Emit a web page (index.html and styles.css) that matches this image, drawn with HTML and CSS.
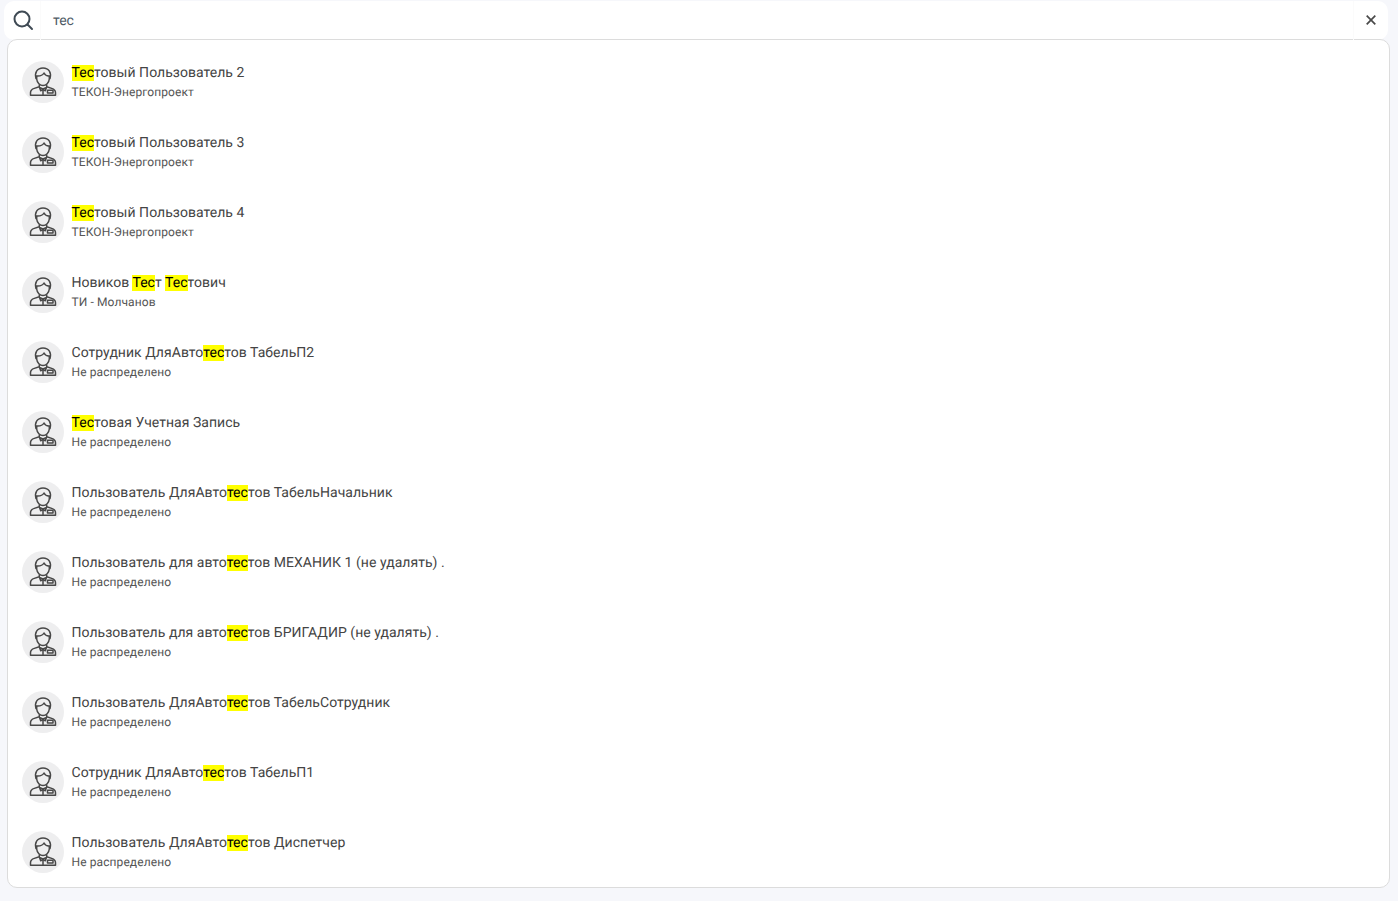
FILE: index.html
```html
<!DOCTYPE html>
<html lang="ru">
<head>
<meta charset="utf-8">
<title>Поиск</title>
<link rel="stylesheet" href="styles.css">
</head>
<body>
<svg class="defs" width="0" height="0">
  <symbol id="user" viewBox="0 0 42 42">
    <g fill="none" stroke="#484848" stroke-width="1.500" stroke-linejoin="round" stroke-linecap="round">
      <path d="M14 17.500C12.300 12 15 7 21 7s8.700 5 7 10.500"/>
      <path d="M14.300 15c3 .3 6.200-.4 7.700-3 1 2 3.300 3.300 5.700 3"/>
      <path d="M14.700 15.500v2.500c.3 3.800 3.300 6.500 6.300 6.500s6-2.700 6.300-6.500v-2.500"/>
      <path d="M17.300 24v1.800l-5 1.600c-2.500.8-3.800 2.200-3.800 4.300v2.500h25v-2.500c0-2.100-1.300-3.500-3.800-4.300l-5-1.600v-1.800"/>
      <path d="M17.500 26.500l1.200 3.300 2.300-1.800 2.300 1.800 1.200-3.300-3.500 1.500zM21 28.500v5"/>
      <path d="M25.500 29.300h5.500v2.700h-5.500z"/>
    </g>
  </symbol>
</svg>
<div class="search">
  <span class="search-icon">
    <svg width="22" height="22" viewBox="0 0 22 22" fill="none" stroke="#3f4a54" stroke-width="2" stroke-linecap="round"><circle cx="10" cy="10" r="7.500"/><path d="M15.500 15.500l4.500 4.500"/></svg>
  </span>
  <span class="search-text">тес</span>
  <span class="search-clear">
    <svg width="10" height="10" viewBox="0 0 10 10" stroke="#4a4a4a" stroke-width="1.700"><path d="M.7.700l8.600 8.600M9.300.700L.7 9.300"/></svg>
  </span>
</div>
<ul class="results">
  <li class="row"><svg class="avatar"><use href="#user"/></svg><div class="info"><div class="name"><mark>Тес</mark>товый Пользователь 2</div><div class="org">ТЕКОН-Энергопроект</div></div></li>
  <li class="row"><svg class="avatar"><use href="#user"/></svg><div class="info"><div class="name"><mark>Тес</mark>товый Пользователь 3</div><div class="org">ТЕКОН-Энергопроект</div></div></li>
  <li class="row"><svg class="avatar"><use href="#user"/></svg><div class="info"><div class="name"><mark>Тес</mark>товый Пользователь 4</div><div class="org">ТЕКОН-Энергопроект</div></div></li>
  <li class="row"><svg class="avatar"><use href="#user"/></svg><div class="info"><div class="name">Новиков <mark>Тес</mark>т <mark>Тес</mark>тович</div><div class="org">ТИ - Молчанов</div></div></li>
  <li class="row"><svg class="avatar"><use href="#user"/></svg><div class="info"><div class="name">Сотрудник ДляАвто<mark>тес</mark>тов ТабельП2</div><div class="org">Не распределено</div></div></li>
  <li class="row"><svg class="avatar"><use href="#user"/></svg><div class="info"><div class="name"><mark>Тес</mark>товая Учетная Запись</div><div class="org">Не распределено</div></div></li>
  <li class="row"><svg class="avatar"><use href="#user"/></svg><div class="info"><div class="name">Пользователь ДляАвто<mark>тес</mark>тов ТабельНачальник</div><div class="org">Не распределено</div></div></li>
  <li class="row"><svg class="avatar"><use href="#user"/></svg><div class="info"><div class="name">Пользователь для авто<mark>тес</mark>тов МЕХАНИК 1 (не удалять) .</div><div class="org">Не распределено</div></div></li>
  <li class="row"><svg class="avatar"><use href="#user"/></svg><div class="info"><div class="name">Пользователь для авто<mark>тес</mark>тов БРИГАДИР (не удалять) .</div><div class="org">Не распределено</div></div></li>
  <li class="row"><svg class="avatar"><use href="#user"/></svg><div class="info"><div class="name">Пользователь ДляАвто<mark>тес</mark>тов ТабельСотрудник</div><div class="org">Не распределено</div></div></li>
  <li class="row"><svg class="avatar"><use href="#user"/></svg><div class="info"><div class="name">Сотрудник ДляАвто<mark>тес</mark>тов ТабельП1</div><div class="org">Не распределено</div></div></li>
  <li class="row"><svg class="avatar"><use href="#user"/></svg><div class="info"><div class="name">Пользователь ДляАвто<mark>тес</mark>тов Диспетчер</div><div class="org">Не распределено</div></div></li>
</ul>
</body>
</html>
```
FILE: styles.css
```css
* { box-sizing: border-box; }
html, body { height: 100%; }
body {
  margin: 0;
  padding: 0 8px 0 4px;
  background: #f6f7fb;
  font-family: Roboto, "Noto Sans", sans-serif;
  color: #4a4a4a;
  text-rendering: geometricPrecision;
  overflow: hidden;
}
.defs { display: block; height: 0; }
.search {
  display: flex;
  align-items: center;
  height: 39px;
  margin-top: 1px;
  margin-right: 2px;
  background: #fff;
  border-radius: 10px;
}
.search-icon {
  display: flex;
  width: 37px;
  height: 39px;
  padding: 8px 0 0 8px;
  border-right: 1px solid #fbfbfb;
}
.search-text {
  flex: 1;
  padding-left: 12px;
  font-size: 14px;
  line-height: 38px;
  color: #4f5b66;
}
.search-clear {
  display: flex;
  width: 35px;
  height: 39px;
  padding-top: 14px;
  justify-content: center;
  border-left: 1px solid #fbfbfb;
}
.results {
  list-style: none;
  margin: -1px 0 0 3px;
  padding: 7px 0 0;
  height: 849px;
  background: #fff;
  border: 1px solid #dcdcdc;
  border-radius: 10px;
}
.row {
  display: flex;
  align-items: center;
  height: 70px;
  padding-left: 14px;
}
.avatar {
  flex: none;
  width: 42px;
  height: 42px;
  background: #eeeeef;
  border-radius: 50%;
}
.info {
  margin-left: 7.500px;
  padding-bottom: 1px;
}
.name {
  font-size: 14px;
  line-height: 20px;
  letter-spacing: .035px;
  color: #444;
}
.org {
  font-size: 12px;
  line-height: 18px;
  letter-spacing: .1px;
  color: #555;
}
mark {
  background: #ffff00;
  color: #000;
}
```
